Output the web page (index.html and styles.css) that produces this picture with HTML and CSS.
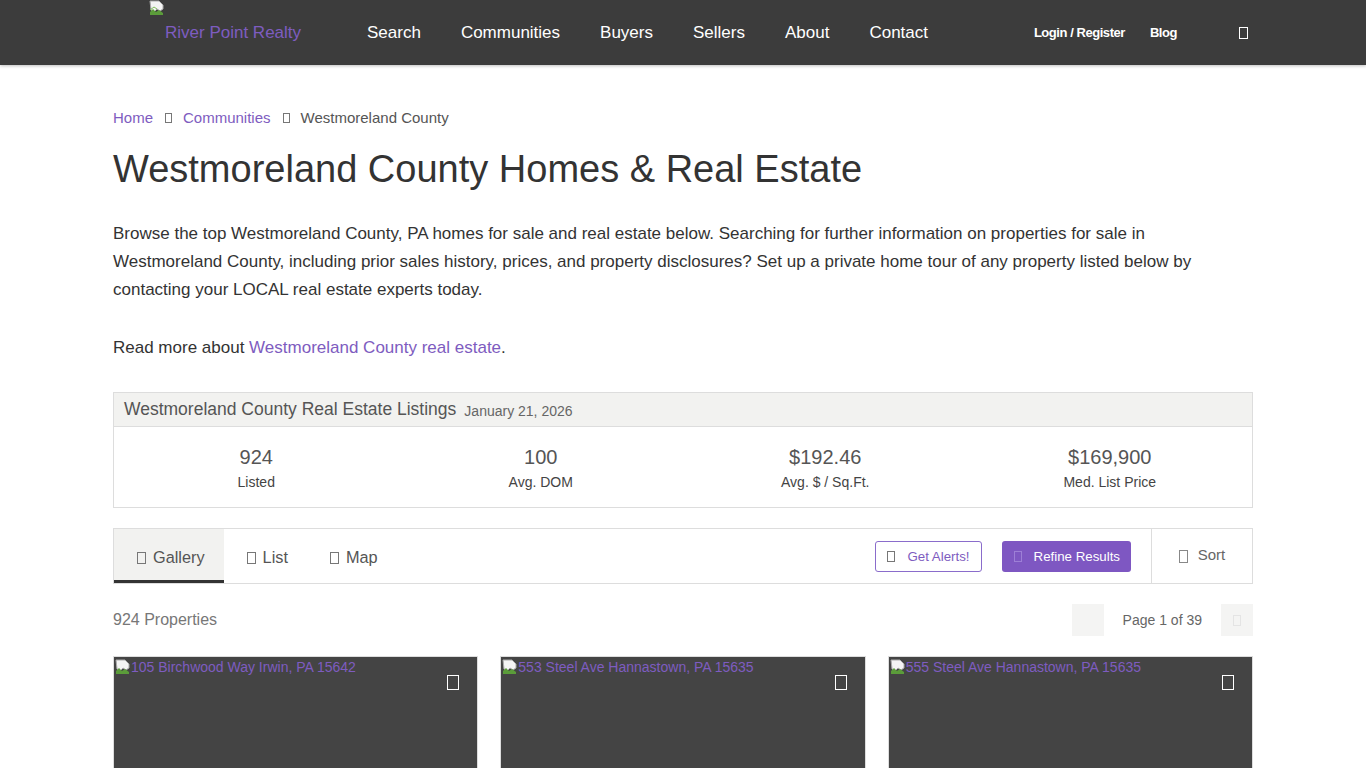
FILE: index.html
```html
<!DOCTYPE html>
<html>
<head>
<meta charset="utf-8">
<link rel="stylesheet" href="styles.css">
</head>
<body>
<header class="topbar">
  <div class="topbar-inner">
    <a class="logo" href="#">
      <svg class="broken" width="16" height="16" viewBox="0 0 16 16"><path d="M1 1h9l4 4v4l-3 2-3-2-3 3-3-2z" fill="#f4f4f4" stroke="#aaa" stroke-width="1"/><path d="M1 12l3-3 3 3 3-2 4 3v2H1z" fill="#5b9c3a"/><path d="M1 10l4-3 3 2" fill="none" stroke="#7fbf5a"/></svg>
      <span class="logo-text">River Point Realty</span>
    </a>
    <nav class="mainnav">
      <a href="#">Search</a>
      <a href="#">Communities</a>
      <a href="#">Buyers</a>
      <a href="#">Sellers</a>
      <a href="#">About</a>
      <a href="#">Contact</a>
    </nav>
    <div class="subnav">
      <a href="#">Login / Register</a>
      <a href="#">Blog</a>
      <span class="tofu tofu-nav"></span>
    </div>
  </div>
</header>

<main class="container">
  <div class="crumbs">
    <a href="#">Home</a><span class="tofu tofu-sm"></span><a href="#">Communities</a><span class="tofu tofu-sm"></span><span class="crumb-current">Westmoreland County</span>
  </div>
  <h1 class="title">Westmoreland County Homes &amp; Real Estate</h1>
  <p class="intro">Browse the top Westmoreland County, PA homes for sale and real estate below. Searching for further information on properties for sale in Westmoreland County, including prior sales history, prices, and property disclosures? Set up a private home tour of any property listed below by contacting your LOCAL real estate experts today.</p>
  <p class="intro">Read more about <a href="#">Westmoreland County real estate</a>.</p>

  <section class="stats">
    <div class="stats-head"><span class="stats-title">Westmoreland County Real Estate Listings</span><span class="stats-date">January 21, 2026</span></div>
    <div class="stats-body">
      <div class="stat"><div class="stat-num">924</div><div class="stat-label">Listed</div></div>
      <div class="stat"><div class="stat-num">100</div><div class="stat-label">Avg. DOM</div></div>
      <div class="stat"><div class="stat-num">$192.46</div><div class="stat-label">Avg. $ / Sq.Ft.</div></div>
      <div class="stat"><div class="stat-num">$169,900</div><div class="stat-label">Med. List Price</div></div>
    </div>
  </section>

  <section class="toolbar">
    <div class="tabs">
      <a class="tab active" href="#"><span class="tofu tofu-tab"></span>Gallery</a>
      <a class="tab" href="#"><span class="tofu tofu-tab"></span>List</a>
      <a class="tab" href="#"><span class="tofu tofu-tab"></span>Map</a>
    </div>
    <div class="actions">
      <a class="btn btn-outline" href="#"><span class="tofu tofu-btn"></span>Get Alerts!</a>
      <a class="btn btn-solid" href="#"><span class="tofu tofu-btn tofu-faint"></span>Refine Results</a>
    </div>
    <div class="sort"><span class="tofu tofu-sort"></span>Sort</div>
  </section>

  <div class="resultbar">
    <span class="count">924 Properties</span>
    <div class="pager">
      <span class="pg-btn"></span>
      <span class="pg-text">Page 1 of 39</span>
      <span class="pg-btn"><span class="tofu tofu-pg"></span></span>
    </div>
  </div>

  <div class="cards">
    <div class="card">
      <div class="card-img"><svg class="broken" width="16" height="16" viewBox="0 0 16 16"><path d="M1 1h9l4 4v4l-3 2-3-2-3 3-3-2z" fill="#f4f4f4" stroke="#aaa"/><path d="M1 12l3-3 3 3 3-2 4 3v2H1z" fill="#5b9c3a"/></svg><span class="alt">105 Birchwood Way Irwin, PA 15642</span></div>
      <span class="tofu tofu-heart"></span>
    </div>
    <div class="card">
      <div class="card-img"><svg class="broken" width="16" height="16" viewBox="0 0 16 16"><path d="M1 1h9l4 4v4l-3 2-3-2-3 3-3-2z" fill="#f4f4f4" stroke="#aaa"/><path d="M1 12l3-3 3 3 3-2 4 3v2H1z" fill="#5b9c3a"/></svg><span class="alt">553 Steel Ave Hannastown, PA 15635</span></div>
      <span class="tofu tofu-heart"></span>
    </div>
    <div class="card">
      <div class="card-img"><svg class="broken" width="16" height="16" viewBox="0 0 16 16"><path d="M1 1h9l4 4v4l-3 2-3-2-3 3-3-2z" fill="#f4f4f4" stroke="#aaa"/><path d="M1 12l3-3 3 3 3-2 4 3v2H1z" fill="#5b9c3a"/></svg><span class="alt">555 Steel Ave Hannastown, PA 15635</span></div>
      <span class="tofu tofu-heart"></span>
    </div>
  </div>
</main>
</body>
</html>
```

FILE: styles.css
```css
* { box-sizing: border-box; }
html, body { margin: 0; padding: 0; }
body {
  font-family: "Liberation Sans", Arial, sans-serif;
  color: #333;
  background: #fff;
  overflow: hidden;
}
a { text-decoration: none; color: #7e5cc0; }

.tofu {
  display: inline-block;
  border: 1px solid currentColor;
  vertical-align: middle;
}

/* header */
.topbar {
  height: 65px;
  background: #3c3c3c;
  box-shadow: 0 1px 3px rgba(0,0,0,.25);
}
.topbar-inner {
  width: 1140px;
  margin: 0 auto;
  height: 65px;
  display: flex;
  align-items: stretch;
  position: relative;
}
.logo {
  width: 228px;
  padding-left: 36px;
  display: block;
  position: relative;
}
.logo .broken { display: block; }
.logo-text {
  display: block;
  margin-left: 16px;
  margin-top: 7px;
  font-size: 17px;
  color: #7e5cc0;
}
.mainnav {
  display: flex;
  align-items: center;
  gap: 40px;
  margin-left: 26px;
}
.mainnav a {
  color: #fff;
  font-size: 17px;
}
.subnav {
  margin-left: auto;
  display: flex;
  align-items: center;
  font-size: 13px;
  font-weight: bold;
  letter-spacing: -0.45px;
}
.subnav a { color: #fff; margin-right: 25px; }
.subnav a + a { margin-right: 62px; }
.tofu-nav {
  width: 9px; height: 12px;
  color: #fff;
  margin-right: 5px;
}

/* container */
.container {
  width: 1140px;
  margin: 0 auto;
}
.crumbs {
  padding-top: 44px;
  font-size: 15px;
  line-height: 17px;
  display: flex;
  align-items: center;
}
.crumbs .tofu-sm {
  width: 7px; height: 10px;
  color: #777;
  margin: 0 11px 0 12px;
}
.crumb-current { color: #555; }
.title {
  margin: 21px 0 0;
  font-size: 38px;
  font-weight: normal;
  line-height: 44px;
  color: #333;
}
.intro {
  font-size: 17px;
  line-height: 28px;
  margin: 29px 0 0;
  color: #333;
}
.intro + .intro { margin-top: 30px; }

/* stats */
.stats {
  margin-top: 30px;
  border: 1px solid #ddd;
}
.stats-head {
  background: #f2f2f0;
  border-bottom: 1px solid #ddd;
  height: 34px;
  padding: 0 10px;
  display: flex;
  align-items: center;
  gap: 8px;
}
.stats-title { font-size: 17.5px; color: #555; }
.stats-date { font-size: 14px; color: #666; margin-top: 2px; }
.stats-body {
  display: grid;
  grid-template-columns: repeat(4, 1fr);
  padding: 18px 0 16px;
}
.stat { text-align: center; }
.stat-num { font-size: 20px; color: #555; line-height: 24px; }
.stat-label { font-size: 14px; color: #444; line-height: 18px; margin-top: 4px; }

/* toolbar */
.toolbar {
  margin-top: 20px;
  border: 1px solid #ddd;
  height: 56px;
  display: flex;
}
.tabs { display: flex; }
.tab {
  display: flex;
  align-items: center;
  padding: 6px 19px 0 22px;
  font-size: 16.3px;
  color: #555;
  border-bottom: 3px solid transparent;
}
.tab.active {
  background: #f2f2f0;
  border-bottom-color: #333;
}
.tofu-tab {
  width: 9px; height: 12px;
  color: #777;
  margin: 0 7px 0 1px;
}
.actions {
  margin-left: auto;
  display: flex;
  align-items: center;
  gap: 20px;
  padding-right: 20px;
}
.btn {
  display: flex;
  align-items: center;
  height: 31px;
  border-radius: 3px;
  font-size: 13.3px;
  padding: 0 11px;
}
.btn-outline {
  border: 1px solid #8a6ccb;
  color: #7e5cc0;
}
.btn-outline .tofu-btn { color: #777; }
.btn-solid {
  background: #7e57c2;
  color: #fff;
  padding: 0 11px 0 12px;
}
.tofu-btn {
  width: 8px; height: 11px;
  color: #666;
  margin-right: 12px;
}
.tofu-faint { color: #9d7fd6; }
.sort {
  width: 101px;
  border-left: 1px solid #ddd;
  display: flex;
  align-items: center;
  justify-content: center;
  font-size: 15px;
  color: #666;
  padding-bottom: 3px;
}
.tofu-sort {
  width: 9px; height: 13px;
  color: #888;
  margin-right: 10px;
  margin-top: 3px;
}

/* results bar */
.resultbar {
  margin-top: 20px;
  display: flex;
  align-items: center;
  justify-content: space-between;
  height: 32px;
}
.count { font-size: 16px; color: #777; }
.pager { display: flex; align-items: center; }
.pg-btn {
  width: 32px; height: 32px;
  background: #f4f4f3;
  display: flex;
  align-items: center;
  justify-content: center;
}
.pg-text { font-size: 14px; color: #666; margin: 0 19px; }
.tofu-pg { width: 8px; height: 11px; color: #e4e4e4; }

/* cards */
.cards {
  margin-top: 20px;
  display: grid;
  grid-template-columns: repeat(3, 1fr);
  gap: 22px;
}
.card {
  position: relative;
  height: 220px;
  border: 1px solid #ddd;
  background: #444;
  padding: 1px;
}
.card-img {
  display: flex;
  align-items: flex-start;
  font-size: 14px;
  line-height: 18px;
}
.card-img .broken { margin-top: 1px; }
.alt { color: #7e5cc0; }
.tofu-heart {
  position: absolute;
  top: 18px;
  right: 18px;
  width: 12px; height: 15px;
  color: #fff;
}
```
